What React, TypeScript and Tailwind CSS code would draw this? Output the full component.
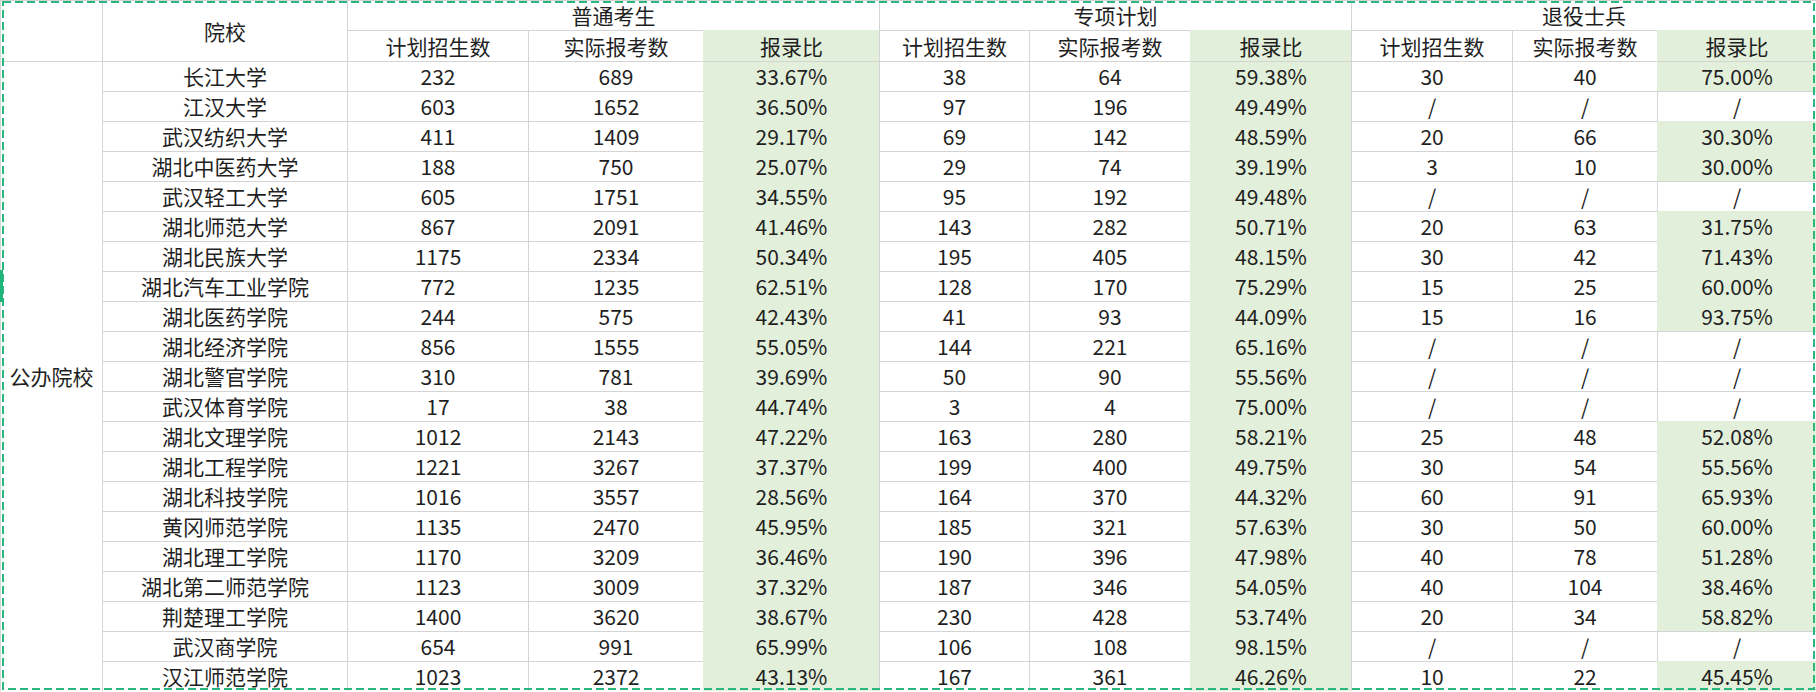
import React from 'react';

type Row = [string, string, string, string, string, string, string, string, string, string];

const rows: Row[] = [
  ['长江大学', '232', '689', '33.67%', '38', '64', '59.38%', '30', '40', '75.00%'],
  ['江汉大学', '603', '1652', '36.50%', '97', '196', '49.49%', '/', '/', '/'],
  ['武汉纺织大学', '411', '1409', '29.17%', '69', '142', '48.59%', '20', '66', '30.30%'],
  ['湖北中医药大学', '188', '750', '25.07%', '29', '74', '39.19%', '3', '10', '30.00%'],
  ['武汉轻工大学', '605', '1751', '34.55%', '95', '192', '49.48%', '/', '/', '/'],
  ['湖北师范大学', '867', '2091', '41.46%', '143', '282', '50.71%', '20', '63', '31.75%'],
  ['湖北民族大学', '1175', '2334', '50.34%', '195', '405', '48.15%', '30', '42', '71.43%'],
  ['湖北汽车工业学院', '772', '1235', '62.51%', '128', '170', '75.29%', '15', '25', '60.00%'],
  ['湖北医药学院', '244', '575', '42.43%', '41', '93', '44.09%', '15', '16', '93.75%'],
  ['湖北经济学院', '856', '1555', '55.05%', '144', '221', '65.16%', '/', '/', '/'],
  ['湖北警官学院', '310', '781', '39.69%', '50', '90', '55.56%', '/', '/', '/'],
  ['武汉体育学院', '17', '38', '44.74%', '3', '4', '75.00%', '/', '/', '/'],
  ['湖北文理学院', '1012', '2143', '47.22%', '163', '280', '58.21%', '25', '48', '52.08%'],
  ['湖北工程学院', '1221', '3267', '37.37%', '199', '400', '49.75%', '30', '54', '55.56%'],
  ['湖北科技学院', '1016', '3557', '28.56%', '164', '370', '44.32%', '60', '91', '65.93%'],
  ['黄冈师范学院', '1135', '2470', '45.95%', '185', '321', '57.63%', '30', '50', '60.00%'],
  ['湖北理工学院', '1170', '3209', '36.46%', '190', '396', '47.98%', '40', '78', '51.28%'],
  ['湖北第二师范学院', '1123', '3009', '37.32%', '187', '346', '54.05%', '40', '104', '38.46%'],
  ['荆楚理工学院', '1400', '3620', '38.67%', '230', '428', '53.74%', '20', '34', '58.82%'],
  ['武汉商学院', '654', '991', '65.99%', '106', '108', '98.15%', '/', '/', '/'],
  ['汉江师范学院', '1023', '2372', '43.13%', '167', '361', '46.26%', '10', '22', '45.45%'],
];

const colWidths = [102, 245, 181, 175, 176, 150, 161, 161, 161, 145, 159];

// ratio columns are filled green, except where the value is "/"
const greenCols = [3, 6, 9];

const white = 'border-l border-t border-[#d4d4d4] bg-white';
const green = 'border-l border-t border-[#e2efda] bg-[#e2efda]';

const App: React.FC = () => {
  return (
    <div className="relative h-[692px] w-[1816px] overflow-hidden bg-white font-['Noto_Sans_CJK_SC',sans-serif] text-[21px] leading-none text-[#1f1f1f]">
      <table className="w-[1816px] table-fixed border-separate border-spacing-0">
        <colgroup>
          {colWidths.map((w, i) => (
            <col key={i} style={{ width: w }} />
          ))}
        </colgroup>
        <thead>
          <tr>
            <td rowSpan={2} className={`${white} h-[61px]`} />
            <td rowSpan={2} className={`${white} text-center`}>院校</td>
            <td colSpan={3} className={`${white} h-[30px] text-center`}>普通考生</td>
            <td colSpan={3} className={`${white} text-center`}>专项计划</td>
            <td colSpan={3} className={`${white} text-center`}>退役士兵</td>
          </tr>
          <tr>
            {['计划招生数', '实际报考数', '报录比', '计划招生数', '实际报考数', '报录比', '计划招生数', '实际报考数', '报录比'].map((h, i) => (
              <td
                key={i}
                className={`${(i + 1) % 3 === 0 ? green : white} h-[31px] text-center whitespace-nowrap`}
              >
                {h}
              </td>
            ))}
          </tr>
        </thead>
        <tbody>
          {rows.map((r, ri) => (
            <tr key={ri}>
              {ri === 0 && (
                <td rowSpan={rows.length} className={`${white} text-center`}>公办院校</td>
              )}
              {r.map((v, ci) => {
                const isGreen = greenCols.includes(ci) && v !== '/';
                const cls = isGreen
                  ? `${green} ${ri === 0 ? 'border-t-[#d4d4d4]' : ''}`
                  : white;
                return (
                  <td key={ci} className={`${cls} h-[30px] text-center whitespace-nowrap`}>
                    {v}
                  </td>
                );
              })}
            </tr>
          ))}
        </tbody>
      </table>

      {/* copy marquee */}
      <svg className="pointer-events-none absolute left-0 top-0" width="1816" height="692">
        <rect x="3" y="2" width="1811" height="687" fill="none" stroke="#2bb67e" strokeWidth="2" strokeDasharray="8 4" />
        <rect x="0" y="270" width="3" height="32" fill="#1fb57a" />
      </svg>
    </div>
  );
};

export default App;
